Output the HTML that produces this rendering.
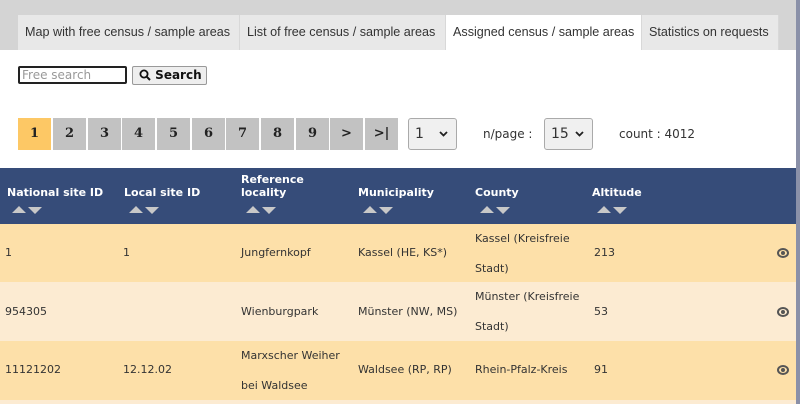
<!DOCTYPE html>
<html><head><style>
*{margin:0;padding:0;box-sizing:border-box}
body{width:800px;height:404px;overflow:hidden;background:#fff;font-family:"DejaVu Sans","Liberation Sans",sans-serif;font-size:11px;color:#333;position:relative}
.a{position:absolute}
.tabbar{left:0;top:0;width:796px;height:50px;background:#d4d4d4}
.tab{top:15px;height:35px;background:#e8e8e8;font-family:"Liberation Sans",sans-serif;font-size:12.6px;line-height:35px;padding-left:7px;color:#333;border-right:1px solid #d8d8d8;white-space:nowrap;overflow:hidden}
.pg{top:118px;width:33px;height:32px;background:#c2c2c2;font-family:"DejaVu Serif",serif;font-weight:bold;font-size:13px;text-align:center;line-height:32px;color:#222}
.sel{top:118px;height:32px;border:1px solid #aaa;border-radius:3px;background:#f0f0f0;font-size:14px;line-height:30px;padding-left:6px}
.hd{top:168px;left:0;width:796px;height:56px;background:#364c79}
.h{color:#fff;font-weight:bold;font-size:11px;line-height:13px}
.ar{width:32px;height:10px}
.row{left:0;width:796px}
.c{position:absolute;font-size:11px;line-height:30px;white-space:nowrap}
.eye{position:absolute;left:777px;width:12px;height:10px;border:2px solid #555;border-radius:50%}
.eye::after{content:"";position:absolute;left:2px;top:1px;width:4px;height:4px;background:#555;border-radius:50%}
</style></head><body>
<div class="a tabbar"></div>
<div class="a tab" style="left:18px;width:222px">Map with free census / sample areas</div>
<div class="a tab" style="left:240px;width:206px">List of free census / sample areas</div>
<div class="a tab" style="left:446px;width:196px;background:#fff">Assigned census / sample areas</div>
<div class="a tab" style="left:642px;width:137px">Statistics on requests</div>
<div class="a" style="left:796px;top:0;width:4px;height:404px;background:#8a90a8"></div>

<div class="a" style="left:18px;top:66px;width:109px;height:18px;border:2px solid #222;border-radius:2px;font-size:12px;color:#999;padding-left:2px;line-height:14px">Free search</div>
<div class="a" style="left:132px;top:66px;width:75px;height:19px;border:1px solid #999;border-radius:2px;background:#eee;font-weight:bold;font-size:12px;line-height:17px;padding-left:6px;color:#111"><svg width="12" height="12" viewBox="0 0 12 12" style="vertical-align:-2px"><circle cx="5" cy="5" r="3.6" stroke="#111" stroke-width="1.8" fill="none"/><path d="M7.6 7.6L11 11" stroke="#111" stroke-width="2"/></svg> Search</div>

<div class="a pg" style="left:18px;background:#fdc865">1</div>
<div class="a pg" style="left:53px">2</div>
<div class="a pg" style="left:88px">3</div>
<div class="a pg" style="left:122px">4</div>
<div class="a pg" style="left:157px">5</div>
<div class="a pg" style="left:192px">6</div>
<div class="a pg" style="left:226px">7</div>
<div class="a pg" style="left:261px">8</div>
<div class="a pg" style="left:296px">9</div>
<div class="a pg" style="left:330px">&gt;</div>
<div class="a pg" style="left:365px">&gt;|</div>
<div class="a sel" style="left:408px;width:49px">1 <svg style="position:absolute;right:8px;top:12px" width="9" height="6" viewBox="0 0 9 6"><path d="M1 1l3.5 3.5L8 1" stroke="#222" stroke-width="1.8" fill="none"/></svg></div>
<div class="a" style="left:483px;top:127px;font-size:12px">n/page :</div>
<div class="a sel" style="left:544px;width:49px">15 <svg style="position:absolute;right:8px;top:12px" width="9" height="6" viewBox="0 0 9 6"><path d="M1 1l3.5 3.5L8 1" stroke="#222" stroke-width="1.8" fill="none"/></svg></div>
<div class="a" style="left:619px;top:127px;font-size:12px">count : 4012</div>

<div class="a hd"></div>
<div class="a h" style="left:7px;top:186px">National site ID</div>
<div class="a h" style="left:124px;top:186px">Local site ID</div>
<div class="a h" style="left:241px;top:173px">Reference<br>locality</div>
<div class="a h" style="left:358px;top:186px">Municipality</div>
<div class="a h" style="left:475px;top:186px">County</div>
<div class="a h" style="left:592px;top:186px">Altitude</div>
<svg class="a ar" style="left:12px;top:205px" viewBox="0 0 32 10"><path d="M0 8L7 1L14 8Z M16 2L30 2L23 9Z" fill="#c8c8c8"/></svg>
<svg class="a ar" style="left:129px;top:205px" viewBox="0 0 32 10"><path d="M0 8L7 1L14 8Z M16 2L30 2L23 9Z" fill="#c8c8c8"/></svg>
<svg class="a ar" style="left:246px;top:205px" viewBox="0 0 32 10"><path d="M0 8L7 1L14 8Z M16 2L30 2L23 9Z" fill="#c8c8c8"/></svg>
<svg class="a ar" style="left:363px;top:205px" viewBox="0 0 32 10"><path d="M0 8L7 1L14 8Z M16 2L30 2L23 9Z" fill="#c8c8c8"/></svg>
<svg class="a ar" style="left:480px;top:205px" viewBox="0 0 32 10"><path d="M0 8L7 1L14 8Z M16 2L30 2L23 9Z" fill="#c8c8c8"/></svg>
<svg class="a ar" style="left:597px;top:205px" viewBox="0 0 32 10"><path d="M0 8L7 1L14 8Z M16 2L30 2L23 9Z" fill="#c8c8c8"/></svg>

<div class="a row" style="top:224px;height:58px;background:#fde0a9">
<div class="c" style="left:5px;top:14px">1</div><div class="c" style="left:123px;top:14px">1</div>
<div class="c" style="left:241px;top:14px">Jungfernkopf</div><div class="c" style="left:358px;top:14px">Kassel (HE, KS*)</div>
<div class="c" style="left:475px;top:0">Kassel (Kreisfreie<br>Stadt)</div><div class="c" style="left:594px;top:14px">213</div>
<div class="eye" style="top:24px"></div></div>
<div class="a row" style="top:282px;height:59px;background:#fcebd2">
<div class="c" style="left:5px;top:15px">954305</div>
<div class="c" style="left:241px;top:15px">Wienburgpark</div><div class="c" style="left:358px;top:15px">Münster (NW, MS)</div>
<div class="c" style="left:475px;top:0">Münster (Kreisfreie<br>Stadt)</div><div class="c" style="left:594px;top:15px">53</div>
<div class="eye" style="top:25px"></div></div>
<div class="a row" style="top:341px;height:59px;background:#fde0a9">
<div class="c" style="left:5px;top:14px">11121202</div><div class="c" style="left:123px;top:14px">12.12.02</div>
<div class="c" style="left:241px;top:0">Marxscher Weiher<br>bei Waldsee</div><div class="c" style="left:358px;top:14px">Waldsee (RP, RP)</div>
<div class="c" style="left:475px;top:14px">Rhein-Pfalz-Kreis</div><div class="c" style="left:594px;top:14px">91</div>
<div class="eye" style="top:24px"></div></div>
<div class="a row" style="top:400px;height:4px;background:#fcebd2"></div>
</body></html>
